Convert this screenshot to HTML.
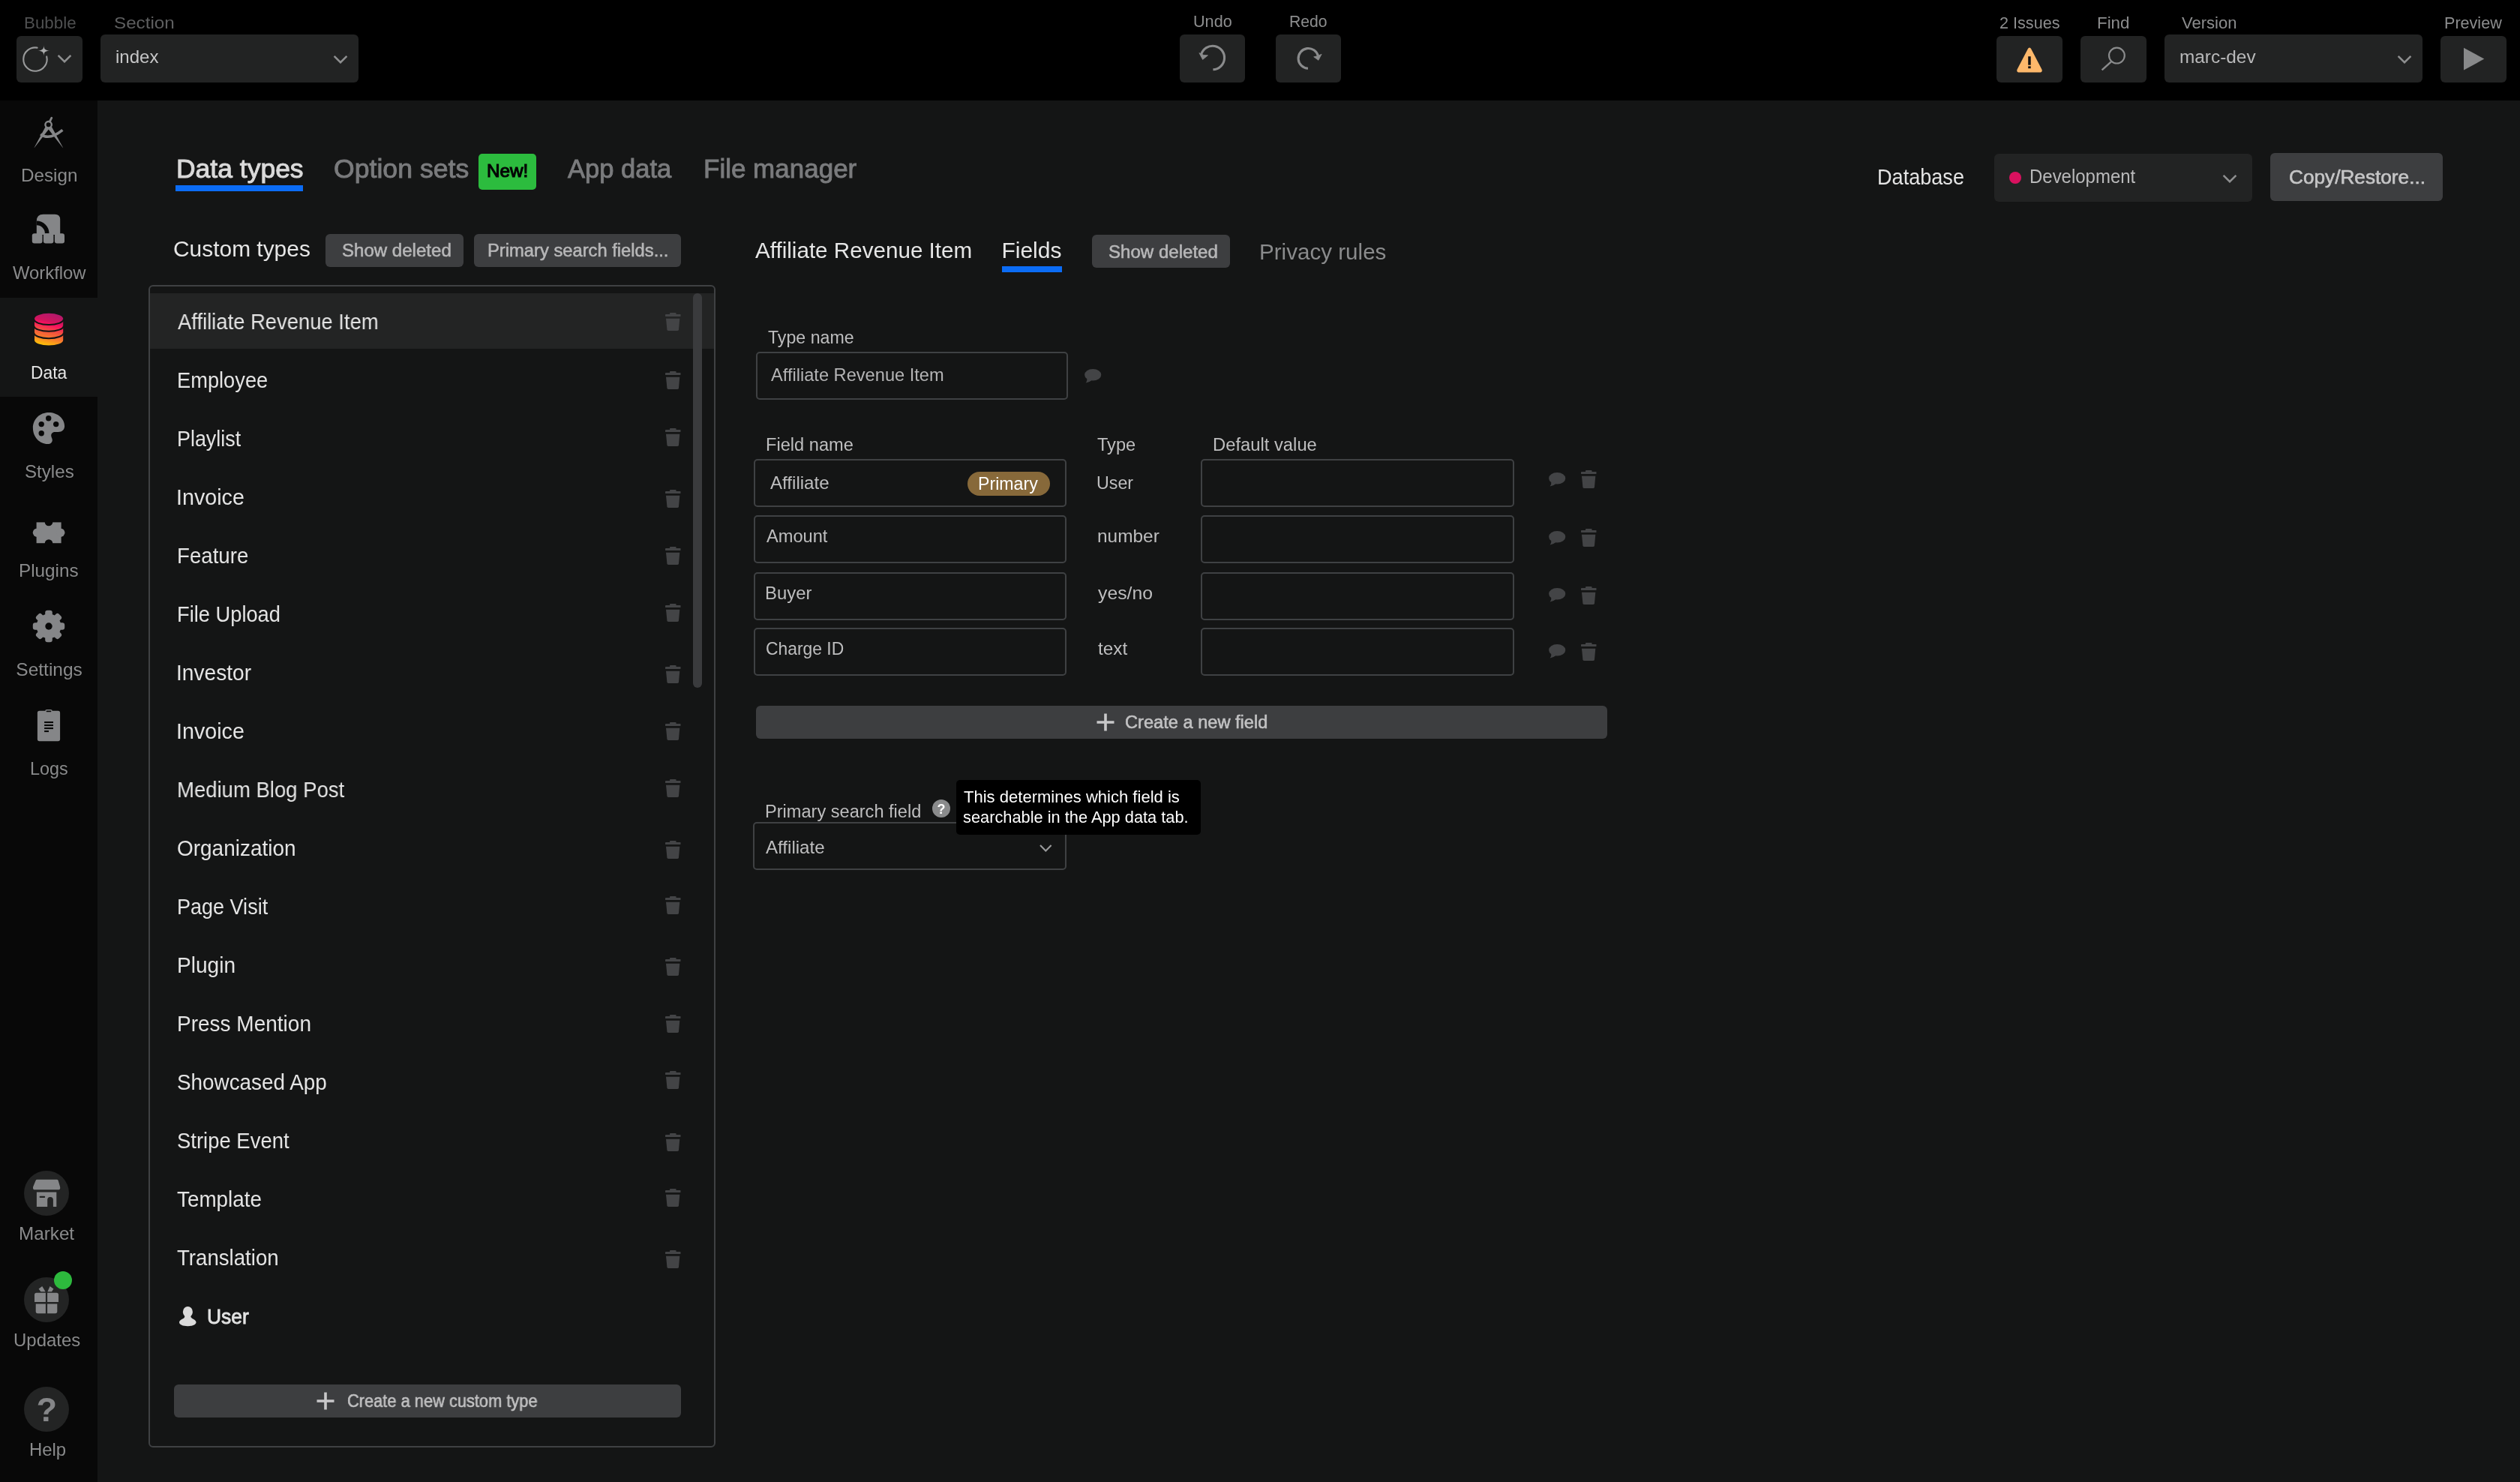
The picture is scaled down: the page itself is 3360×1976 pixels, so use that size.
<!DOCTYPE html>
<html lang="en"><head><meta charset="utf-8"><title>Data - Bubble Editor</title>
<style>
html,body{margin:0;padding:0;}
body{width:3360px;height:1976px;background:#141515;position:relative;overflow:hidden;font-family:"Liberation Sans",Arial,sans-serif;}
.b{position:absolute;box-sizing:border-box;}
.t{position:absolute;white-space:nowrap;transform-origin:0 0;}
#app{position:absolute;left:0;top:0;width:3360px;height:1976px;will-change:transform;}
</style></head><body><div id="app">
<div class="b " style="left:0px;top:0px;width:3360px;height:134px;background:#000000;"></div>
<div class="b " style="left:0px;top:134px;width:130px;height:1842px;background:#080808;"></div>
<div class="b " style="left:0px;top:397px;width:130px;height:132px;background:#141515;"></div>
<div class="t" style="left:31.76px;top:18px;font-size:22.5px;line-height:25px;color:#4f5051;transform:scaleX(0.9933);">Bubble</div>
<div class="b " style="left:22px;top:48px;width:88px;height:62px;background:#222323;border-radius:6px;"></div>
<svg class="b" style="left:25px;top:56px;" width="46" height="46" viewBox="0 0 46 46"><defs><radialGradient id="sp" cx="0.5" cy="0.5" r="0.5"><stop offset="0" stop-color="#a9aaab"/><stop offset="0.45" stop-color="#a9aaab"/><stop offset="1" stop-color="#a9aaab" stop-opacity="0"/></radialGradient></defs><path d="M24.6 7.6 A15.7 15.7 0 1 0 37.2 19.4" fill="none" stroke="#98999a" stroke-width="2.1" stroke-linecap="round"/><path d="M33.4 3 C33.6 9.8 34.2 10.9 42.2 11.6 C34.2 12.3 33.6 13.4 33.4 20.2 C33.2 13.4 32.6 12.3 24.6 11.6 C32.6 10.9 33.2 9.8 33.4 3Z" fill="url(#sp)"/></svg>
<svg class="b" style="left:75px;top:70px;" width="22" height="16" viewBox="0 0 22 16"><path d="M2.6 3.8 L11 12.2 L19.4 3.8" fill="none" stroke="#8e8f90" stroke-width="2.5"/></svg>
<div class="t" style="left:152.22px;top:18px;font-size:22.5px;line-height:25px;color:#5e5f60;transform:scaleX(1.0759);">Section</div>
<div class="b " style="left:134px;top:46px;width:344px;height:64px;background:#222323;border-radius:6px;"></div>
<div class="t" style="left:153.73px;top:62px;font-size:24.5px;line-height:27px;color:#c6c6c7;transform:scaleX(0.9815);">index</div>
<svg class="b" style="left:443px;top:71px;" width="22" height="16" viewBox="0 0 22 16"><path d="M2.6 3.8 L11 12.2 L19.4 3.8" fill="none" stroke="#8e8f90" stroke-width="2.5"/></svg>
<div class="t" style="left:1590.52px;top:16px;font-size:22.5px;line-height:25px;color:#8c8d8e;transform:scaleX(0.9608);">Undo</div>
<div class="b " style="left:1573px;top:46px;width:87px;height:64px;background:#222323;border-radius:6px;"></div>
<div class="t" style="left:1719.35px;top:16px;font-size:22.5px;line-height:25px;color:#8c8d8e;transform:scaleX(0.9412);">Redo</div>
<div class="b " style="left:1701px;top:46px;width:87px;height:64px;background:#222323;border-radius:6px;"></div>
<svg class="b" style="left:1590px;top:50px;" width="54" height="54" viewBox="0 0 54 54"><path d="M11.6 22.6 A15.8 15.8 0 1 1 27.4 42.8" fill="none" stroke="#8a8b8c" stroke-width="3.1"/><path d="M8.9 20.6 L13.6 29.4 L20.5 23.8 L14.8 23.4Z" fill="#8a8b8c" stroke="#8a8b8c" stroke-width="0.8" stroke-linejoin="round"/></svg>
<svg class="b" style="left:1718px;top:50px;" width="54" height="54" viewBox="0 0 54 54"><path d="M39.5 24.7 A13.4 13.4 0 1 0 26 41.3" fill="none" stroke="#8a8b8c" stroke-width="3.1"/><path d="M33.7 25.8 L39.9 30.3 L44.1 22.2 L39 24.6Z" fill="#8a8b8c" stroke="#8a8b8c" stroke-width="0.8" stroke-linejoin="round"/></svg>
<div class="t" style="left:2665.74px;top:18px;font-size:22.5px;line-height:25px;color:#8c8d8e;transform:scaleX(0.9610);">2 Issues</div>
<div class="b " style="left:2662px;top:48px;width:88px;height:62px;background:#222323;border-radius:6px;"></div>
<svg class="b" style="left:2686px;top:60px;" width="40" height="40" viewBox="0 0 40 40"><path d="M20 3.6 Q21.4 3.6 22.2 5.2 L36.4 32.6 Q37.6 35.4 35 36.5 L5 36.5 Q2.4 35.4 3.6 32.6 L17.8 5.2 Q18.6 3.6 20 3.6Z" fill="#fdb86b"/><rect x="18.2" y="15.2" width="3.5" height="11.5" fill="#111"/><rect x="18.2" y="28.3" width="3.5" height="2.9" fill="#111"/></svg>
<div class="t" style="left:2795.86px;top:18px;font-size:22.5px;line-height:25px;color:#8c8d8e;transform:scaleX(0.9926);">Find</div>
<div class="b " style="left:2774px;top:48px;width:88px;height:62px;background:#222323;border-radius:6px;"></div>
<svg class="b" style="left:2798px;top:58px;" width="44" height="44" viewBox="0 0 44 44"><circle cx="24.4" cy="16.1" r="10.4" fill="none" stroke="#8a8b8c" stroke-width="2.2"/><path d="M16.8 24.4 L4.6 35.4" stroke="#8a8b8c" stroke-width="2.5" stroke-linecap="butt"/></svg>
<div class="t" style="left:2909.00px;top:18px;font-size:22.5px;line-height:25px;color:#8c8d8e;transform:scaleX(0.9796);">Version</div>
<div class="b " style="left:2886px;top:46px;width:344px;height:64px;background:#222323;border-radius:6px;"></div>
<div class="t" style="left:2905.51px;top:62px;font-size:24.5px;line-height:27px;color:#b9b9ba;transform:scaleX(0.9950);">marc-dev</div>
<svg class="b" style="left:3195px;top:71px;" width="22" height="16" viewBox="0 0 22 16"><path d="M2.6 3.8 L11 12.2 L19.4 3.8" fill="none" stroke="#8e8f90" stroke-width="2.5"/></svg>
<div class="t" style="left:3259.02px;top:18px;font-size:22.5px;line-height:25px;color:#8c8d8e;transform:scaleX(0.9585);">Preview</div>
<div class="b " style="left:3254px;top:48px;width:88px;height:62px;background:#222323;border-radius:6px;"></div>
<svg class="b" style="left:3280px;top:60px;" width="40" height="40" viewBox="0 0 40 40"><path d="M5 3.8 L32.3 18.6 L5 33.6Z" fill="#88898a"/></svg>
<svg class="b" style="left:42px;top:152px;" width="48" height="50" viewBox="0 0 48 50"><g fill="none" stroke="#858688"><circle cx="22.6" cy="14.2" r="4.2" stroke-width="2.4"/><path d="M24.4 10 L26.8 5.2" stroke-width="2.8" stroke-linecap="round"/><path d="M12.2 26.8 Q23.4 35.8 41.4 21.4" stroke-width="3.6"/></g><path d="M18.9 16.6 L23.6 19.4 L4.2 44.6 L3.4 45.2Z" fill="#858688"/><path d="M26.6 16.6 L21.9 19.4 L41.4 44.6 L42.2 45.2Z" fill="#858688"/></svg>
<div class="t" style="left:27.82px;top:220px;font-size:24.5px;line-height:27px;color:#8a8b8c;transform:scaleX(0.9897);">Design</div>
<svg class="b" style="left:40px;top:283px;" width="50" height="46" viewBox="0 0 50 46"><path d="M8.8 30 L8.8 11.8 Q8.8 2.8 17.8 2.8 L33.2 2.8 Q40.2 2.8 40.2 9.8 L40.2 30Z" fill="#858688"/><path d="M8.8 14.4 A13.9 13.9 0 0 1 22.7 28.3" fill="none" stroke="#080808" stroke-width="5.6"/><rect x="2.8" y="28.3" width="13.7" height="13.3" rx="3" fill="#858688"/><rect x="17.9" y="28.3" width="13.5" height="13.3" rx="3" fill="#858688"/><rect x="32.9" y="28.3" width="13.1" height="13.3" rx="3" fill="#858688"/></svg>
<div class="t" style="left:17.05px;top:350px;font-size:24.5px;line-height:27px;color:#8a8b8c;transform:scaleX(0.9726);">Workflow</div>
<svg class="b" style="left:44px;top:414px;" width="42" height="50" viewBox="0 0 42 50"><defs><linearGradient id="dg" gradientUnits="userSpaceOnUse" x1="26" y1="3" x2="16" y2="47"><stop offset="0" stop-color="#ae1a6c"/><stop offset="0.27" stop-color="#d3145e"/><stop offset="0.36" stop-color="#fb1060"/><stop offset="0.55" stop-color="#f0503f"/><stop offset="0.75" stop-color="#f8782e"/><stop offset="1" stop-color="#ffc505"/></linearGradient></defs><path d="M2 11 L2 39.4 A19 7 0 0 0 40.2 39.4 L40.2 11Z" fill="url(#dg)"/><ellipse cx="21.1" cy="11" rx="19.1" ry="7.2" fill="url(#dg)"/><path d="M1.4 11.6 A19.6 7.4 0 0 0 40.8 11.6" fill="none" stroke="#141515" stroke-width="2"/><path d="M1.4 20.4 A19.6 7.4 0 0 0 40.8 20.4" fill="none" stroke="#141515" stroke-width="2"/><path d="M1.4 29.8 A19.6 7.4 0 0 0 40.8 29.8" fill="none" stroke="#141515" stroke-width="2"/></svg>
<div class="t" style="left:40.84px;top:483px;font-size:24.5px;line-height:27px;color:#e6e6e6;transform:scaleX(0.9320);">Data</div>
<svg class="b" style="left:43px;top:549px;" width="44" height="44" viewBox="0 0 44 44"><path d="M22 0.9 C10 0.9 0.9 9.8 0.9 21.6 C0.9 33.6 9.6 43.1 20.6 43.1 C24.6 43.1 26.8 40.8 26.8 37.8 C26.8 35.4 25.2 34.2 25.2 31.8 C25.2 29 27.4 27 30.4 27 L34.4 27 C39.8 27 43.1 23.8 43.1 19 C43.1 8.8 33.6 0.9 22 0.9Z" fill="#858688"/><circle cx="12.2" cy="16.6" r="3.7" fill="#080808"/><circle cx="21.7" cy="8.7" r="3.7" fill="#080808"/><circle cx="31.7" cy="16.6" r="3.7" fill="#080808"/><circle cx="12.2" cy="28.8" r="3.7" fill="#080808"/></svg>
<div class="t" style="left:32.82px;top:615px;font-size:24.5px;line-height:27px;color:#8a8b8c;transform:scaleX(0.9846);">Styles</div>
<svg class="b" style="left:43px;top:695px;" width="44" height="31" viewBox="0 0 44 31"><rect x="5.6" y="1.4" width="33" height="27.8" fill="#858688"/><circle cx="6.6" cy="15.2" r="5.8" fill="#858688"/><circle cx="37.6" cy="15.2" r="5.8" fill="#858688"/><circle cx="22" cy="1" r="5.3" fill="#080808"/><circle cx="22" cy="29.6" r="5.3" fill="#080808"/></svg>
<div class="t" style="left:25.42px;top:747px;font-size:24.5px;line-height:27px;color:#8a8b8c;transform:scaleX(0.9910);">Plugins</div>
<svg class="b" style="left:42px;top:812px;" width="46" height="46" viewBox="0 0 46 46"><rect x="18.2" y="1.8" width="9.6" height="12" rx="3.2" transform="rotate(0 23 23)" fill="#858688"/><rect x="18.2" y="1.8" width="9.6" height="12" rx="3.2" transform="rotate(45 23 23)" fill="#858688"/><rect x="18.2" y="1.8" width="9.6" height="12" rx="3.2" transform="rotate(90 23 23)" fill="#858688"/><rect x="18.2" y="1.8" width="9.6" height="12" rx="3.2" transform="rotate(135 23 23)" fill="#858688"/><rect x="18.2" y="1.8" width="9.6" height="12" rx="3.2" transform="rotate(180 23 23)" fill="#858688"/><rect x="18.2" y="1.8" width="9.6" height="12" rx="3.2" transform="rotate(225 23 23)" fill="#858688"/><rect x="18.2" y="1.8" width="9.6" height="12" rx="3.2" transform="rotate(270 23 23)" fill="#858688"/><rect x="18.2" y="1.8" width="9.6" height="12" rx="3.2" transform="rotate(315 23 23)" fill="#858688"/><circle cx="23" cy="23" r="16.4" fill="#858688"/><circle cx="23" cy="23" r="4.7" fill="#080808"/></svg>
<div class="t" style="left:21.30px;top:879px;font-size:24.5px;line-height:27px;color:#8a8b8c;">Settings</div>
<svg class="b" style="left:46px;top:944px;" width="38" height="46" viewBox="0 0 38 46"><rect x="3.9" y="3.8" width="30.2" height="40.4" rx="2.6" fill="#858688"/><rect x="14.9" y="2.7" width="8.2" height="3.4" rx="1.7" fill="#080808" stroke="#858688" stroke-width="1.5"/><g fill="#080808"><rect x="13.1" y="18" width="11.9" height="2.1"/><rect x="13.1" y="22" width="11.9" height="2.1"/><rect x="13.1" y="26" width="11.9" height="2.1"/><rect x="13.1" y="30" width="5.9" height="2.1"/></g></svg>
<div class="t" style="left:39.79px;top:1011px;font-size:24.5px;line-height:27px;color:#8a8b8c;transform:scaleX(0.9545);">Logs</div>
<div class="b " style="left:32px;top:1561px;width:60px;height:60px;background:#232424;border-radius:30px;"></div>
<svg class="b" style="left:42px;top:1571px;" width="40" height="40" viewBox="0 0 40 40"><path d="M7.4 1.8 L33.8 1.8 Q35.2 1.8 35.7 3.2 L38.1 11.4 Q39 15.3 35.2 15.3 L5 15.3 Q1.2 15.3 2.1 11.4 L5.5 3.2 Q6 1.8 7.4 1.8Z" fill="#858688"/><path d="M6.9 18.5 L33.3 18.5 L33.3 38.1 L28.9 38.1 L28.9 28.8 Q28.9 24.9 25 24.9 Q21.2 24.9 21.2 28.8 L21.2 38.1 L6.9 38.1Z" fill="#858688"/><rect x="10.6" y="23.8" width="7.6" height="2.3" rx="1.1" fill="#232424"/></svg>
<div class="t" style="left:25.12px;top:1631px;font-size:24.5px;line-height:27px;color:#8a8b8c;transform:scaleX(0.9897);">Market</div>
<div class="b " style="left:32px;top:1703px;width:60px;height:60px;background:#232424;border-radius:30px;"></div>
<svg class="b" style="left:42px;top:1712px;" width="40" height="42" viewBox="0 0 40 42"><path d="M9.6 6.6 L14.2 3 L18.6 10.2 L12.4 10.2Z M21.4 10.2 L24.6 3 L29.4 6.4 L27 10.2Z" fill="#858688"/><path d="M6.6 11.7 L18.9 11.7 L18.9 24 L4 24 L4 14.3 Q4 11.7 6.6 11.7Z M21.1 11.7 L33.4 11.7 Q36 11.7 36 14.3 L36 24 L21.1 24Z" fill="#858688"/><path d="M5.7 26.6 L18.9 26.6 L18.9 39.2 L8.3 39.2 Q5.7 39.2 5.7 36.6Z M21.1 26.6 L34.3 26.6 L34.3 36.6 Q34.3 39.2 31.7 39.2 L21.1 39.2Z" fill="#858688"/></svg>
<div class="b " style="left:72px;top:1695px;width:24px;height:24px;background:#2db93d;border-radius:12px;"></div>
<div class="t" style="left:17.79px;top:1773px;font-size:24.5px;line-height:27px;color:#8a8b8c;transform:scaleX(0.9780);">Updates</div>
<div class="b " style="left:32px;top:1849px;width:60px;height:60px;background:#232424;border-radius:30px;"></div>
<div class="t" style="left:48.50px;top:1854px;font-size:45px;line-height:51px;color:#858688;font-weight:700;">?</div>
<div class="t" style="left:38.80px;top:1919px;font-size:24.5px;line-height:27px;color:#8a8b8c;transform:scaleX(0.9747);">Help</div>
<div class="t" style="left:234.72px;top:205px;font-size:35px;line-height:39px;color:#dadada;transform:scaleX(1.0137);-webkit-text-stroke:1.0px #dadada;">Data types</div>
<div class="b " style="left:234px;top:247px;width:170px;height:8px;background:#0b6cf5;"></div>
<div class="t" style="left:444.93px;top:205px;font-size:35px;line-height:39px;color:#7a7b7d;transform:scaleX(1.0180);-webkit-text-stroke:0.9px #7a7b7d;">Option sets</div>
<div class="b " style="left:638px;top:205px;width:77px;height:48px;background:#2cbc3e;border-radius:5px;"></div>
<div class="t" style="left:648.74px;top:215px;font-size:23px;line-height:26px;color:#050505;transform:scaleX(1.0524);-webkit-text-stroke:1.1px #050505;">New!</div>
<div class="t" style="left:757.34px;top:205px;font-size:35px;line-height:39px;color:#7a7b7d;transform:scaleX(0.9869);-webkit-text-stroke:0.9px #7a7b7d;">App data</div>
<div class="t" style="left:938.00px;top:205px;font-size:35px;line-height:39px;color:#7a7b7d;-webkit-text-stroke:0.9px #7a7b7d;">File manager</div>
<div class="t" style="left:2503.10px;top:220px;font-size:29px;line-height:32px;color:#e4e4e4;transform:scaleX(0.9342);">Database</div>
<div class="b " style="left:2659px;top:205px;width:344px;height:64px;background:#222323;border-radius:6px;"></div>
<div class="b " style="left:2679px;top:229px;width:16px;height:16px;background:#d9115f;border-radius:8px;"></div>
<div class="t" style="left:2706.08px;top:221px;font-size:25px;line-height:28px;color:#b9b9ba;transform:scaleX(0.9586);">Development</div>
<svg class="b" style="left:2962px;top:230px;" width="22" height="16" viewBox="0 0 22 16"><path d="M2.6 3.8 L11 12.2 L19.4 3.8" fill="none" stroke="#8e8f90" stroke-width="2.5"/></svg>
<div class="b " style="left:3027px;top:204px;width:230px;height:64px;background:#3d3e40;border-radius:6px;"></div>
<div class="t" style="left:3051.50px;top:222px;font-size:25px;line-height:28px;color:#c6c6c7;transform:scaleX(1.0477);-webkit-text-stroke:0.6px #c6c6c7;">Copy/Restore...</div>
<div class="t" style="left:231.28px;top:315px;font-size:29.5px;line-height:33px;color:#e6e6e6;transform:scaleX(1.0138);">Custom types</div>
<div class="b " style="left:434px;top:312px;width:184px;height:44px;background:#3d3e40;border-radius:6px;"></div>
<div class="t" style="left:456.34px;top:321px;font-size:23px;line-height:26px;color:#b7b7b8;transform:scaleX(1.0459);-webkit-text-stroke:0.55px #b7b7b8;">Show deleted</div>
<div class="b " style="left:632px;top:312px;width:276px;height:44px;background:#3d3e40;border-radius:6px;"></div>
<div class="t" style="left:649.78px;top:321px;font-size:23px;line-height:26px;color:#b7b7b8;transform:scaleX(1.0323);-webkit-text-stroke:0.55px #b7b7b8;">Primary search fields...</div>
<div class="b " style="left:198px;top:380px;width:756px;height:1550px;border-radius:6px;border:2px solid #3f4143;"></div>
<div class="b " style="left:200px;top:391px;width:752px;height:74px;background:#232424;"></div>
<div class="b " style="left:924px;top:391px;width:12px;height:526px;background:#3a3b3d;border-radius:6px;"></div>
<div class="t" style="left:236.80px;top:413px;font-size:29px;line-height:32px;color:#e4e4e4;transform:scaleX(0.9451);">Affiliate Revenue Item</div>
<svg class="b" style="left:887.2px;top:417px;" width="21" height="25" viewBox="0 0 21 25"><rect x="6" y="0" width="8.6" height="2.6" rx="0.9" fill="#434446"/><rect x="0" y="1.9" width="20.5" height="3.2" rx="0.7" fill="#434446"/><path d="M1 7.8 L19.3 7.8 L18 22.2 Q17.8 24.1 15.9 24.1 L4.5 24.1 Q2.6 24.1 2.4 22.2Z" fill="#434446"/></svg>
<div class="t" style="left:235.58px;top:491px;font-size:29px;line-height:32px;color:#e4e4e4;transform:scaleX(0.9402);">Employee</div>
<svg class="b" style="left:887.2px;top:495px;" width="21" height="25" viewBox="0 0 21 25"><rect x="6" y="0" width="8.6" height="2.6" rx="0.9" fill="#434446"/><rect x="0" y="1.9" width="20.5" height="3.2" rx="0.7" fill="#434446"/><path d="M1 7.8 L19.3 7.8 L18 22.2 Q17.8 24.1 15.9 24.1 L4.5 24.1 Q2.6 24.1 2.4 22.2Z" fill="#434446"/></svg>
<div class="t" style="left:235.61px;top:569px;font-size:29px;line-height:32px;color:#e4e4e4;transform:scaleX(0.9274);">Playlist</div>
<svg class="b" style="left:887.2px;top:571px;" width="21" height="25" viewBox="0 0 21 25"><rect x="6" y="0" width="8.6" height="2.6" rx="0.9" fill="#434446"/><rect x="0" y="1.9" width="20.5" height="3.2" rx="0.7" fill="#434446"/><path d="M1 7.8 L19.3 7.8 L18 22.2 Q17.8 24.1 15.9 24.1 L4.5 24.1 Q2.6 24.1 2.4 22.2Z" fill="#434446"/></svg>
<div class="t" style="left:234.98px;top:647px;font-size:29px;line-height:32px;color:#e4e4e4;transform:scaleX(0.9886);">Invoice</div>
<svg class="b" style="left:887.2px;top:653px;" width="21" height="25" viewBox="0 0 21 25"><rect x="6" y="0" width="8.6" height="2.6" rx="0.9" fill="#434446"/><rect x="0" y="1.9" width="20.5" height="3.2" rx="0.7" fill="#434446"/><path d="M1 7.8 L19.3 7.8 L18 22.2 Q17.8 24.1 15.9 24.1 L4.5 24.1 Q2.6 24.1 2.4 22.2Z" fill="#434446"/></svg>
<div class="t" style="left:235.55px;top:725px;font-size:29px;line-height:32px;color:#e4e4e4;transform:scaleX(0.9534);">Feature</div>
<svg class="b" style="left:887.2px;top:729px;" width="21" height="25" viewBox="0 0 21 25"><rect x="6" y="0" width="8.6" height="2.6" rx="0.9" fill="#434446"/><rect x="0" y="1.9" width="20.5" height="3.2" rx="0.7" fill="#434446"/><path d="M1 7.8 L19.3 7.8 L18 22.2 Q17.8 24.1 15.9 24.1 L4.5 24.1 Q2.6 24.1 2.4 22.2Z" fill="#434446"/></svg>
<div class="t" style="left:235.58px;top:803px;font-size:29px;line-height:32px;color:#e4e4e4;transform:scaleX(0.9404);">File Upload</div>
<svg class="b" style="left:887.2px;top:805px;" width="21" height="25" viewBox="0 0 21 25"><rect x="6" y="0" width="8.6" height="2.6" rx="0.9" fill="#434446"/><rect x="0" y="1.9" width="20.5" height="3.2" rx="0.7" fill="#434446"/><path d="M1 7.8 L19.3 7.8 L18 22.2 Q17.8 24.1 15.9 24.1 L4.5 24.1 Q2.6 24.1 2.4 22.2Z" fill="#434446"/></svg>
<div class="t" style="left:235.03px;top:881px;font-size:29px;line-height:32px;color:#e4e4e4;transform:scaleX(0.9700);">Investor</div>
<svg class="b" style="left:887.2px;top:887px;" width="21" height="25" viewBox="0 0 21 25"><rect x="6" y="0" width="8.6" height="2.6" rx="0.9" fill="#434446"/><rect x="0" y="1.9" width="20.5" height="3.2" rx="0.7" fill="#434446"/><path d="M1 7.8 L19.3 7.8 L18 22.2 Q17.8 24.1 15.9 24.1 L4.5 24.1 Q2.6 24.1 2.4 22.2Z" fill="#434446"/></svg>
<div class="t" style="left:234.98px;top:959px;font-size:29px;line-height:32px;color:#e4e4e4;transform:scaleX(0.9886);">Invoice</div>
<svg class="b" style="left:887.2px;top:963px;" width="21" height="25" viewBox="0 0 21 25"><rect x="6" y="0" width="8.6" height="2.6" rx="0.9" fill="#434446"/><rect x="0" y="1.9" width="20.5" height="3.2" rx="0.7" fill="#434446"/><path d="M1 7.8 L19.3 7.8 L18 22.2 Q17.8 24.1 15.9 24.1 L4.5 24.1 Q2.6 24.1 2.4 22.2Z" fill="#434446"/></svg>
<div class="t" style="left:235.57px;top:1037px;font-size:29px;line-height:32px;color:#e4e4e4;transform:scaleX(0.9485);">Medium Blog Post</div>
<svg class="b" style="left:887.2px;top:1039px;" width="21" height="25" viewBox="0 0 21 25"><rect x="6" y="0" width="8.6" height="2.6" rx="0.9" fill="#434446"/><rect x="0" y="1.9" width="20.5" height="3.2" rx="0.7" fill="#434446"/><path d="M1 7.8 L19.3 7.8 L18 22.2 Q17.8 24.1 15.9 24.1 L4.5 24.1 Q2.6 24.1 2.4 22.2Z" fill="#434446"/></svg>
<div class="t" style="left:235.59px;top:1115px;font-size:29px;line-height:32px;color:#e4e4e4;transform:scaleX(0.9643);">Organization</div>
<svg class="b" style="left:887.2px;top:1121px;" width="21" height="25" viewBox="0 0 21 25"><rect x="6" y="0" width="8.6" height="2.6" rx="0.9" fill="#434446"/><rect x="0" y="1.9" width="20.5" height="3.2" rx="0.7" fill="#434446"/><path d="M1 7.8 L19.3 7.8 L18 22.2 Q17.8 24.1 15.9 24.1 L4.5 24.1 Q2.6 24.1 2.4 22.2Z" fill="#434446"/></svg>
<div class="t" style="left:235.60px;top:1193px;font-size:29px;line-height:32px;color:#e4e4e4;transform:scaleX(0.9315);">Page Visit</div>
<svg class="b" style="left:887.2px;top:1195px;" width="21" height="25" viewBox="0 0 21 25"><rect x="6" y="0" width="8.6" height="2.6" rx="0.9" fill="#434446"/><rect x="0" y="1.9" width="20.5" height="3.2" rx="0.7" fill="#434446"/><path d="M1 7.8 L19.3 7.8 L18 22.2 Q17.8 24.1 15.9 24.1 L4.5 24.1 Q2.6 24.1 2.4 22.2Z" fill="#434446"/></svg>
<div class="t" style="left:235.52px;top:1271px;font-size:29px;line-height:32px;color:#e4e4e4;transform:scaleX(0.9673);">Plugin</div>
<svg class="b" style="left:887.2px;top:1277px;" width="21" height="25" viewBox="0 0 21 25"><rect x="6" y="0" width="8.6" height="2.6" rx="0.9" fill="#434446"/><rect x="0" y="1.9" width="20.5" height="3.2" rx="0.7" fill="#434446"/><path d="M1 7.8 L19.3 7.8 L18 22.2 Q17.8 24.1 15.9 24.1 L4.5 24.1 Q2.6 24.1 2.4 22.2Z" fill="#434446"/></svg>
<div class="t" style="left:235.53px;top:1349px;font-size:29px;line-height:32px;color:#e4e4e4;transform:scaleX(0.9655);">Press Mention</div>
<svg class="b" style="left:887.2px;top:1353px;" width="21" height="25" viewBox="0 0 21 25"><rect x="6" y="0" width="8.6" height="2.6" rx="0.9" fill="#434446"/><rect x="0" y="1.9" width="20.5" height="3.2" rx="0.7" fill="#434446"/><path d="M1 7.8 L19.3 7.8 L18 22.2 Q17.8 24.1 15.9 24.1 L4.5 24.1 Q2.6 24.1 2.4 22.2Z" fill="#434446"/></svg>
<div class="t" style="left:235.60px;top:1427px;font-size:29px;line-height:32px;color:#e4e4e4;transform:scaleX(0.9606);">Showcased App</div>
<svg class="b" style="left:887.2px;top:1428px;" width="21" height="25" viewBox="0 0 21 25"><rect x="6" y="0" width="8.6" height="2.6" rx="0.9" fill="#434446"/><rect x="0" y="1.9" width="20.5" height="3.2" rx="0.7" fill="#434446"/><path d="M1 7.8 L19.3 7.8 L18 22.2 Q17.8 24.1 15.9 24.1 L4.5 24.1 Q2.6 24.1 2.4 22.2Z" fill="#434446"/></svg>
<div class="t" style="left:235.62px;top:1505px;font-size:29px;line-height:32px;color:#e4e4e4;transform:scaleX(0.9467);">Stripe Event</div>
<svg class="b" style="left:887.2px;top:1511px;" width="21" height="25" viewBox="0 0 21 25"><rect x="6" y="0" width="8.6" height="2.6" rx="0.9" fill="#434446"/><rect x="0" y="1.9" width="20.5" height="3.2" rx="0.7" fill="#434446"/><path d="M1 7.8 L19.3 7.8 L18 22.2 Q17.8 24.1 15.9 24.1 L4.5 24.1 Q2.6 24.1 2.4 22.2Z" fill="#434446"/></svg>
<div class="t" style="left:236.32px;top:1583px;font-size:29px;line-height:32px;color:#e4e4e4;transform:scaleX(0.9603);">Template</div>
<svg class="b" style="left:887.2px;top:1585px;" width="21" height="25" viewBox="0 0 21 25"><rect x="6" y="0" width="8.6" height="2.6" rx="0.9" fill="#434446"/><rect x="0" y="1.9" width="20.5" height="3.2" rx="0.7" fill="#434446"/><path d="M1 7.8 L19.3 7.8 L18 22.2 Q17.8 24.1 15.9 24.1 L4.5 24.1 Q2.6 24.1 2.4 22.2Z" fill="#434446"/></svg>
<div class="t" style="left:236.32px;top:1661px;font-size:29px;line-height:32px;color:#e4e4e4;transform:scaleX(0.9529);">Translation</div>
<svg class="b" style="left:887.2px;top:1667px;" width="21" height="25" viewBox="0 0 21 25"><rect x="6" y="0" width="8.6" height="2.6" rx="0.9" fill="#434446"/><rect x="0" y="1.9" width="20.5" height="3.2" rx="0.7" fill="#434446"/><path d="M1 7.8 L19.3 7.8 L18 22.2 Q17.8 24.1 15.9 24.1 L4.5 24.1 Q2.6 24.1 2.4 22.2Z" fill="#434446"/></svg>
<svg class="b" style="left:238.7px;top:1741.9px;" width="23" height="27" viewBox="0 0 23 27"><ellipse cx="11.4" cy="7.2" rx="6.5" ry="7.2" fill="#dadada"/><path d="M7.4 12 C7.6 15.2 5.6 16 3.4 17 C1.2 18.2 0 19.6 0 21 C0 24.2 5 26.2 11.3 26.2 C17.6 26.2 22.5 24.2 22.5 21 C22.5 19.6 21.4 18.2 19.2 17 C17 16 15 15.2 15.3 12Z" fill="#dadada"/></svg>
<div class="t" style="left:276.06px;top:1740px;font-size:27.5px;line-height:31px;color:#e2e2e2;transform:scaleX(0.9602);-webkit-text-stroke:0.8px #e2e2e2;">User</div>
<div class="b " style="left:232px;top:1846px;width:676px;height:44px;background:#3d3e40;border-radius:6px;"></div>
<svg class="b" style="left:422px;top:1856px;" width="24" height="24" viewBox="0 0 24 24"><path d="M12 0.5 L12 23.5 M0.5 12 L23.5 12" stroke="#c8c8c9" stroke-width="3.6"/></svg>
<div class="t" style="left:463.07px;top:1855px;font-size:23px;line-height:26px;color:#c2c2c3;transform:scaleX(0.9490);-webkit-text-stroke:0.55px #c2c2c3;">Create a new custom type</div>
<div class="t" style="left:1006.60px;top:317px;font-size:30px;line-height:33px;color:#e6e6e6;transform:scaleX(0.9873);">Affiliate Revenue Item</div>
<div class="t" style="left:1335.41px;top:317px;font-size:30px;line-height:33px;color:#e6e6e6;">Fields</div>
<div class="b " style="left:1336px;top:355px;width:80px;height:8px;background:#0b6cf5;"></div>
<div class="b " style="left:1456px;top:313px;width:184px;height:44px;background:#3d3e40;border-radius:6px;"></div>
<div class="t" style="left:1478.24px;top:323px;font-size:23px;line-height:26px;color:#b7b7b8;transform:scaleX(1.0466);-webkit-text-stroke:0.55px #b7b7b8;">Show deleted</div>
<div class="t" style="left:1678.53px;top:319px;font-size:30px;line-height:33px;color:#8a8b8c;transform:scaleX(0.9866);">Privacy rules</div>
<div class="t" style="left:1024.30px;top:437px;font-size:23px;line-height:26px;color:#bebebf;transform:scaleX(1.0067);">Type name</div>
<div class="b " style="left:1008px;top:469px;width:416px;height:64px;border-radius:5px;border:2px solid #3f4143;"></div>
<div class="t" style="left:1028.30px;top:486px;font-size:24.5px;line-height:27px;color:#b4b4b5;transform:scaleX(0.9642);">Affiliate Revenue Item</div>
<svg class="b" style="left:1445.7px;top:491.7px;" width="23" height="19" viewBox="0 0 23 19"><ellipse cx="11.2" cy="7.7" rx="11.1" ry="7.7" fill="#434446"/><path d="M3.4 12.6 Q3.6 16 1.7 18.5 Q6.4 17.8 10.4 14.6Z" fill="#434446"/></svg>
<div class="t" style="left:1020.50px;top:580px;font-size:23px;line-height:26px;color:#bebebf;transform:scaleX(1.0270);">Field name</div>
<div class="t" style="left:1463.49px;top:580px;font-size:23px;line-height:26px;color:#bebebf;transform:scaleX(1.0259);">Type</div>
<div class="t" style="left:1616.79px;top:580px;font-size:23px;line-height:26px;color:#bebebf;transform:scaleX(1.0342);">Default value</div>
<div class="b " style="left:1005px;top:612px;width:417px;height:64px;border-radius:5px;border:2px solid #3f4143;"></div>
<div class="t" style="left:1026.70px;top:630px;font-size:24.5px;line-height:27px;color:#bebebf;transform:scaleX(0.9841);">Affiliate</div>
<div class="t" style="left:1462.34px;top:630px;font-size:24.5px;line-height:27px;color:#bebebf;transform:scaleX(0.9495);">User</div>
<div class="b " style="left:1601px;top:612px;width:418px;height:64px;border-radius:5px;border:2px solid #3f4143;"></div>
<svg class="b" style="left:2064.8px;top:629.6px;" width="23" height="19" viewBox="0 0 23 19"><ellipse cx="11.2" cy="7.7" rx="11.1" ry="7.7" fill="#434446"/><path d="M3.4 12.6 Q3.6 16 1.7 18.5 Q6.4 17.8 10.4 14.6Z" fill="#434446"/></svg>
<svg class="b" style="left:2107.9px;top:627px;" width="21" height="25" viewBox="0 0 21 25"><rect x="6" y="0" width="8.6" height="2.6" rx="0.9" fill="#434446"/><rect x="0" y="1.9" width="20.5" height="3.2" rx="0.7" fill="#434446"/><path d="M1 7.8 L19.3 7.8 L18 22.2 Q17.8 24.1 15.9 24.1 L4.5 24.1 Q2.6 24.1 2.4 22.2Z" fill="#434446"/></svg>
<div class="b " style="left:1005px;top:687px;width:417px;height:64px;border-radius:5px;border:2px solid #3f4143;"></div>
<div class="t" style="left:1021.70px;top:701px;font-size:24.5px;line-height:27px;color:#bebebf;transform:scaleX(0.9645);">Amount</div>
<div class="t" style="left:1462.50px;top:701px;font-size:24.5px;line-height:27px;color:#bebebf;transform:scaleX(0.9969);">number</div>
<div class="b " style="left:1601px;top:687px;width:418px;height:64px;border-radius:5px;border:2px solid #3f4143;"></div>
<svg class="b" style="left:2064.8px;top:707.6px;" width="23" height="19" viewBox="0 0 23 19"><ellipse cx="11.2" cy="7.7" rx="11.1" ry="7.7" fill="#434446"/><path d="M3.4 12.6 Q3.6 16 1.7 18.5 Q6.4 17.8 10.4 14.6Z" fill="#434446"/></svg>
<svg class="b" style="left:2107.9px;top:705px;" width="21" height="25" viewBox="0 0 21 25"><rect x="6" y="0" width="8.6" height="2.6" rx="0.9" fill="#434446"/><rect x="0" y="1.9" width="20.5" height="3.2" rx="0.7" fill="#434446"/><path d="M1 7.8 L19.3 7.8 L18 22.2 Q17.8 24.1 15.9 24.1 L4.5 24.1 Q2.6 24.1 2.4 22.2Z" fill="#434446"/></svg>
<div class="b " style="left:1005px;top:763px;width:417px;height:64px;border-radius:5px;border:2px solid #3f4143;"></div>
<div class="t" style="left:1019.75px;top:777px;font-size:24.5px;line-height:27px;color:#bebebf;transform:scaleX(0.9756);">Buyer</div>
<div class="t" style="left:1464.00px;top:777px;font-size:24.5px;line-height:27px;color:#bebebf;transform:scaleX(1.0105);">yes/no</div>
<div class="b " style="left:1601px;top:763px;width:418px;height:64px;border-radius:5px;border:2px solid #3f4143;"></div>
<svg class="b" style="left:2064.8px;top:784.1px;" width="23" height="19" viewBox="0 0 23 19"><ellipse cx="11.2" cy="7.7" rx="11.1" ry="7.7" fill="#434446"/><path d="M3.4 12.6 Q3.6 16 1.7 18.5 Q6.4 17.8 10.4 14.6Z" fill="#434446"/></svg>
<svg class="b" style="left:2107.9px;top:781.5px;" width="21" height="25" viewBox="0 0 21 25"><rect x="6" y="0" width="8.6" height="2.6" rx="0.9" fill="#434446"/><rect x="0" y="1.9" width="20.5" height="3.2" rx="0.7" fill="#434446"/><path d="M1 7.8 L19.3 7.8 L18 22.2 Q17.8 24.1 15.9 24.1 L4.5 24.1 Q2.6 24.1 2.4 22.2Z" fill="#434446"/></svg>
<div class="b " style="left:1005px;top:837px;width:417px;height:64px;border-radius:5px;border:2px solid #3f4143;"></div>
<div class="t" style="left:1020.53px;top:851px;font-size:24.5px;line-height:27px;color:#bebebf;transform:scaleX(0.9336);">Charge ID</div>
<div class="t" style="left:1463.75px;top:851px;font-size:24.5px;line-height:27px;color:#bebebf;transform:scaleX(0.9936);">text</div>
<div class="b " style="left:1601px;top:837px;width:418px;height:64px;border-radius:5px;border:2px solid #3f4143;"></div>
<svg class="b" style="left:2064.8px;top:859.1px;" width="23" height="19" viewBox="0 0 23 19"><ellipse cx="11.2" cy="7.7" rx="11.1" ry="7.7" fill="#434446"/><path d="M3.4 12.6 Q3.6 16 1.7 18.5 Q6.4 17.8 10.4 14.6Z" fill="#434446"/></svg>
<svg class="b" style="left:2107.9px;top:856.5px;" width="21" height="25" viewBox="0 0 21 25"><rect x="6" y="0" width="8.6" height="2.6" rx="0.9" fill="#434446"/><rect x="0" y="1.9" width="20.5" height="3.2" rx="0.7" fill="#434446"/><path d="M1 7.8 L19.3 7.8 L18 22.2 Q17.8 24.1 15.9 24.1 L4.5 24.1 Q2.6 24.1 2.4 22.2Z" fill="#434446"/></svg>
<div class="b " style="left:1290px;top:629px;width:110px;height:32px;background:#87693a;border-radius:16px;"></div>
<div class="t" style="left:1304.11px;top:631px;font-size:24.5px;line-height:27px;color:#ffffff;transform:scaleX(0.9455);">Primary</div>
<div class="b " style="left:1008px;top:941px;width:1135px;height:44px;background:#3d3e40;border-radius:6px;"></div>
<svg class="b" style="left:1461.6px;top:951px;" width="24" height="24" viewBox="0 0 24 24"><path d="M12 0.5 L12 23.5 M0.5 12 L23.5 12" stroke="#c8c8c9" stroke-width="3.6"/></svg>
<div class="t" style="left:1499.70px;top:950px;font-size:23px;line-height:26px;color:#c2c2c3;transform:scaleX(1.0270);-webkit-text-stroke:0.55px #c2c2c3;">Create a new field</div>
<div class="t" style="left:1019.81px;top:1069px;font-size:23px;line-height:26px;color:#bebebf;transform:scaleX(1.0250);">Primary search field</div>
<div class="b " style="left:1243px;top:1066px;width:24px;height:24px;background:#8a8b8c;border-radius:12px;"></div>
<div class="t" style="left:1249.62px;top:1069px;font-size:18px;line-height:20px;color:#ffffff;font-weight:700;">?</div>
<div class="b " style="left:1004px;top:1096px;width:418px;height:64px;border-radius:5px;border:2px solid #3f4143;"></div>
<div class="t" style="left:1020.70px;top:1116px;font-size:24.5px;line-height:27px;color:#bebebf;transform:scaleX(0.9841);">Affiliate</div>
<svg class="b" style="left:1383px;top:1122px;" width="22" height="16" viewBox="0 0 22 16"><path d="M4 5 L11.3 12.6 L18.6 5" fill="none" stroke="#9a9b9c" stroke-width="2.1"/></svg>
<div class="b " style="left:1275px;top:1040px;width:326px;height:73px;background:#000000;border-radius:5px;"></div>
<div class="t" style="left:1284.51px;top:1050px;font-size:22.5px;line-height:25px;color:#ffffff;transform:scaleX(0.9795);">This determines which field is</div>
<div class="t" style="left:1284.27px;top:1077px;font-size:22.5px;line-height:25px;color:#ffffff;transform:scaleX(0.9691);">searchable in the App data tab.</div>
</div></body></html>
